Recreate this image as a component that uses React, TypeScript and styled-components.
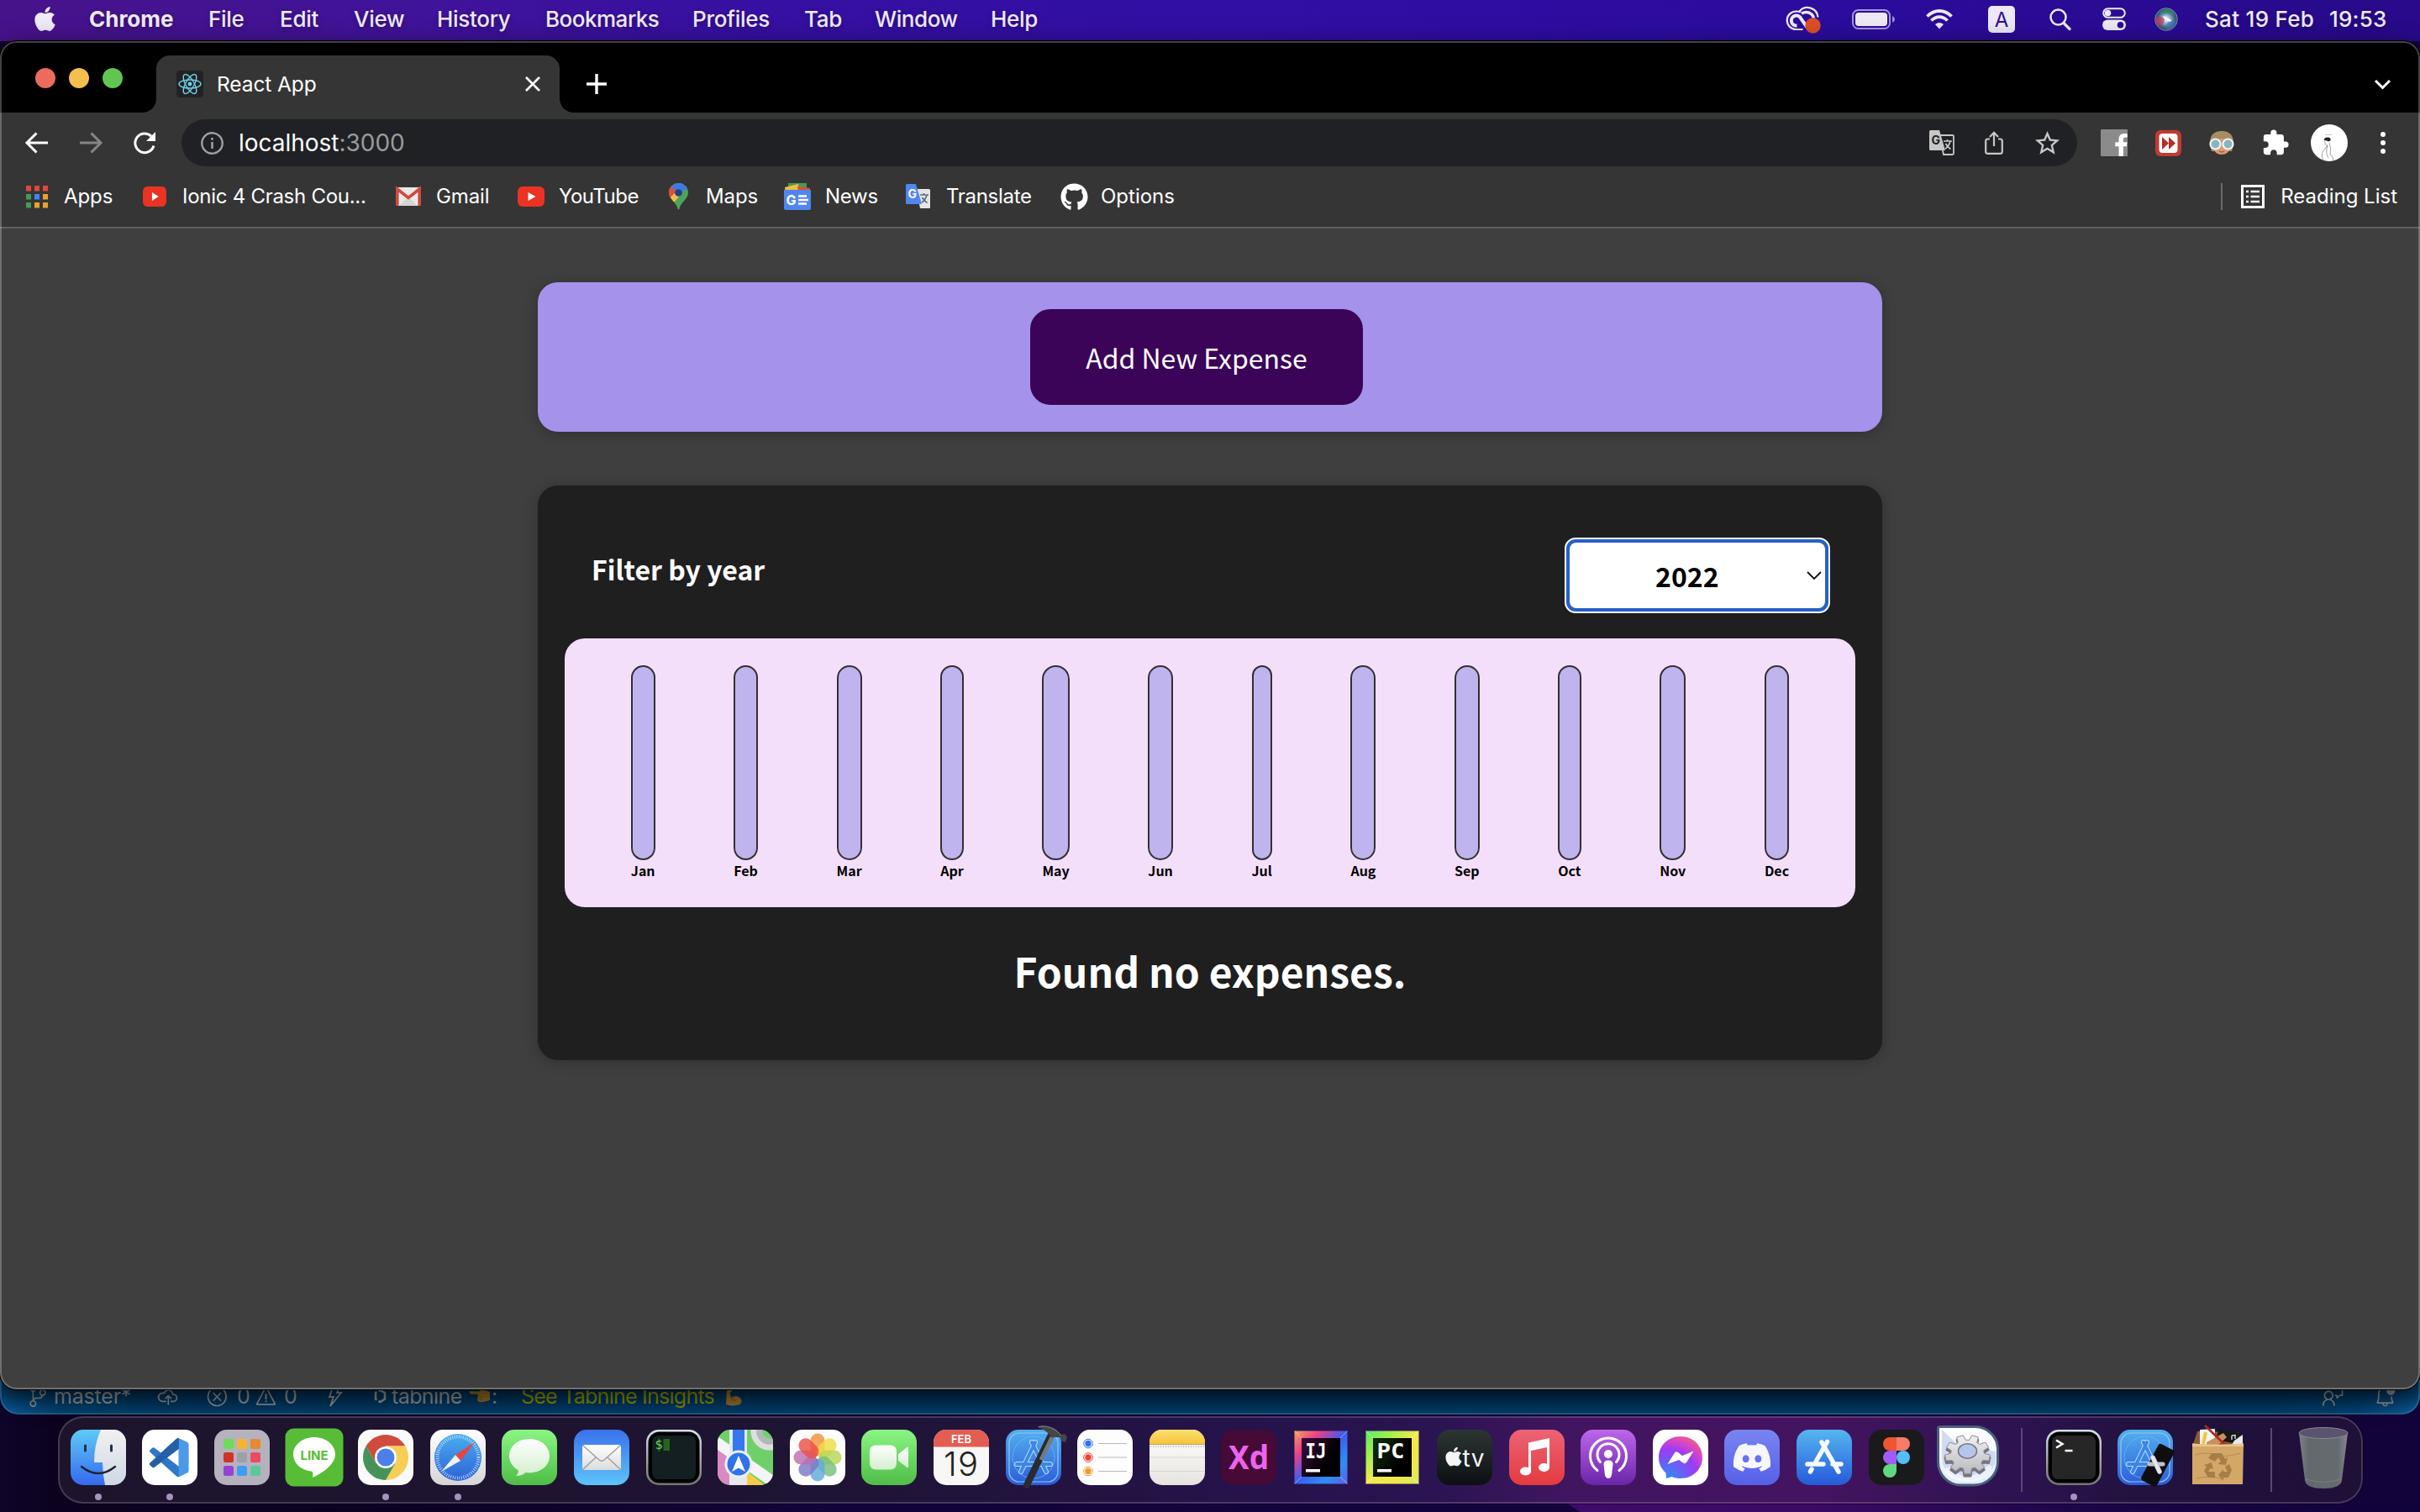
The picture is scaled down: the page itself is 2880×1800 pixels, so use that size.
import React from "react";
import styled, { createGlobalStyle } from "styled-components";
import { FaApple, FaDiscord, FaFacebookF, FaGithub } from "react-icons/fa";
import { MdExtension, MdStarBorder } from "react-icons/md";
import {
  VscBellDot,
  VscCloudUpload,
  VscError,
  VscFeedback,
  VscSourceControl,
  VscWarning,
} from "react-icons/vsc";

const ui = `Inter, "Liberation Sans", sans-serif`;
const jp = `"Noto Sans CJK JP", "Noto Sans", sans-serif`;

const GlobalStyle = createGlobalStyle`
  *, *::before, *::after { box-sizing: border-box; }
  body { margin: 0; background: #0d0326; font-family: ${ui}; }
  svg { display: block; flex: none; overflow: visible; }
`;

/* ---------- desktop ---------- */

const Desktop = styled.div`
  position: relative;
  width: 2880px;
  height: 1800px;
  overflow: hidden;
  display: flex;
  flex-direction: column;
  background: linear-gradient(90deg, #0e0529 0, #0c0220 60px, #0b0120 400px, #12033a 1000px, #14043e 1860px, #12033a 2880px);
  &::after {
    content: "";
    position: absolute;
    left: 1862px;
    bottom: 0;
    width: 1018px;
    height: 12px;
    background: linear-gradient(90deg, #3f0b6c 0, #3a0a66 300px, #1b0548 620px, #10023a 100%);
    clip-path: polygon(0 0, 100% 0, 100% 100%, 19px 100%);
  }
`;

const MenuBar = styled.header`
  flex: none;
  height: 49px;
  display: flex;
  align-items: center;
  justify-content: space-between;
  padding: 0 38px 4px 37px;
  color: #efeaf7;
  font-size: 26px;
  white-space: pre;
  background: linear-gradient(90deg, #47138a 0, #40139a 500px, #3610a2 900px, #300fa4 1500px, #2b0c9e 2100px, #280a8a 2880px);
`;

const Row = styled.div`
  display: flex;
  align-items: center;
`;

const MenuItem = styled.span<{ $w: number; $ls?: number; $bold?: boolean }>`
  flex: none;
  width: ${(p) => p.$w}px;
  font-weight: ${(p) => (p.$bold ? 700 : 500)};
  letter-spacing: ${(p) => p.$ls ?? -0.3}px;
  text-shadow: 0 2px 6px rgba(0, 0, 0, 0.3);
`;

const Slot = styled.span<{ $w: number }>`
  flex: none;
  display: flex;
  align-items: center;
  width: ${(p) => p.$w}px;
`;

/* ---------- browser ---------- */

const Browser = styled.main`
  position: relative;
  z-index: 1;
  flex: none;
  height: 1605px;
  border-radius: 20px;
  overflow: hidden;
  display: flex;
  flex-direction: column;
  background: #3f3f3f;
  box-shadow: 0 0 0 1px #000, 0 8px 30px rgba(0, 0, 0, 0.7);
  &::after {
    content: "";
    position: absolute;
    inset: 0;
    border: 2px solid rgba(255, 255, 255, 0.26);
    border-radius: 20px;
    pointer-events: none;
  }
`;

const TabStrip = styled.div`
  flex: none;
  height: 85px;
  background: #000;
  display: flex;
  align-items: flex-end;
  padding-left: 42px;
`;

const Lights = styled.div`
  display: flex;
  gap: 16px;
  width: 144px;
  padding-bottom: 29px;
`;

const Light = styled.i<{ $c: string }>`
  width: 24px;
  height: 24px;
  border-radius: 50%;
  background: ${(p) => p.$c};
`;

const Tab = styled.div`
  position: relative;
  width: 480px;
  height: 68px;
  border-radius: 16px 16px 0 0;
  background: #353535;
  display: flex;
  align-items: center;
  padding: 0 23px 0 24px;
  color: #fff;
  font-size: 24px;
  &::before, &::after {
    content: "";
    position: absolute;
    bottom: 0;
    width: 16px;
    height: 16px;
  }
  &::before { left: -16px; background: radial-gradient(circle at 0 0, transparent 15.5px, #353535 16px); }
  &::after { right: -16px; background: radial-gradient(circle at 100% 0, transparent 15.5px, #353535 16px); }
`;

const Favicon = styled.span`
  width: 32px;
  height: 32px;
  border-radius: 4px;
  background: #222;
  display: grid;
  place-items: center;
  margin-right: 16px;
`;

const TabTitle = styled.span`
  flex: 1;
  font-size: 24.5px;
  letter-spacing: -0.1px;
  padding-bottom: 1px;
`;

const TabActions = styled.div`
  flex: 1;
  display: flex;
  justify-content: space-between;
  padding: 0 35px 22px 32px;
`;

const Toolbar = styled.div`
  flex: none;
  height: 72px;
  background: #353535;
  display: flex;
  align-items: center;
  padding-left: 30px;
`;

const Address = styled.div`
  flex: none;
  width: 2256px;
  height: 56px;
  border-radius: 28px;
  background: #202124;
  display: flex;
  align-items: center;
  padding: 0 18px 0 23px;
  font-size: 28px;
  letter-spacing: -0.02px;
  color: #fff;
  white-space: pre;
`;

const Port = styled.span`
  color: #9a9a9c;
  flex: 1;
`;

const Bookmarks = styled.div`
  flex: none;
  height: 66px;
  background: #353535;
  border-bottom: 2px solid #5f6061;
  display: flex;
  align-items: center;
  justify-content: space-between;
  padding: 0 27px 9px 30px;
  color: #fff;
  font-size: 24px;
  white-space: pre;
`;

const Bookmark = styled.span<{ $w: number; $icon: number; $ls?: number }>`
  flex: none;
  width: ${(p) => p.$w}px;
  display: flex;
  align-items: center;
  letter-spacing: ${(p) => p.$ls ?? -0.1}px;
  & > svg {
    margin-top: 1px;
    margin-right: ${(p) => p.$icon}px;
  }
`;

const Reading = styled.div`
  display: flex;
  align-items: center;
  height: 32px;
  border-left: 2px solid #6b6b6b;
  padding-left: 22px;
  gap: 19px;
`;

/* ---------- expenses page ---------- */

const Page = styled.section`
  flex: 1;
  display: flex;
  flex-direction: column;
  align-items: center;
  gap: 64px;
  padding-top: 64px;
  font-family: ${jp};
`;

const Card = styled.div<{ $bg: string }>`
  width: 1600px;
  border-radius: 24px;
  padding: 32px;
  background: ${(p) => p.$bg};
  box-shadow: 0 2px 16px rgba(0, 0, 0, 0.25);
`;

const AddCard = styled(Card)`
  height: 178px;
  display: flex;
  justify-content: center;
`;

const AddButton = styled.button`
  width: 396px;
  height: 114px;
  margin-right: 32px;
  padding: 0 0 1px;
  border: 2px solid #3b0458;
  border-radius: 24px;
  background: #3b0458;
  color: #fff;
  font: 400 32px/46px ${jp};
`;

const ExpensesCard = styled(Card)`
  height: 684px;
  display: flex;
  flex-direction: column;
  align-items: stretch;
`;

const FilterRow = styled.div`
  display: flex;
  justify-content: space-between;
  align-items: flex-start;
  height: 150px;
  padding: 30px 30px 0 32px;
`;

const FilterLabel = styled.label`
  color: #fff;
  font-weight: 700;
  font-size: 32px;
  line-height: 46px;
  padding-top: 14px;
`;

const YearSelect = styled.div`
  width: 316px;
  height: 90px;
  border-radius: 13px;
  border: 2px solid #fff;
  background: #2760c8;
  padding: 4px;
  display: flex;
`;

const YearValue = styled.div`
  flex: 1;
  border-radius: 8px;
  background: #fff;
  color: #000;
  font-weight: 700;
  font-size: 32px;
  line-height: 46px;
  display: flex;
  align-items: center;
  justify-content: space-between;
  padding: 0 4px 1px 102px;
  & > svg { margin-bottom: -1px; }
`;

const Chart = styled.div`
  flex: none;
  height: 320px;
  border-radius: 24px;
  background: #f4dffb;
  padding: 32px;
  display: flex;
  justify-content: space-around;
`;

const Month = styled.div`
  display: flex;
  flex-direction: column;
  align-items: stretch;
  font-size: 16px;
  font-weight: 700;
  line-height: 24px;
  color: #000;
  text-align: center;
`;

const Bar = styled.div`
  height: 232px;
  border: 2px solid #313131;
  border-radius: 24px;
  background: #c0b4ee;
`;

const Empty = styled.h2`
  margin: 40px 0 0;
  text-align: center;
  color: #fff;
  font-size: 48px;
  line-height: 70px;
  font-weight: 700;
`;

/* ---------- editor status bar ---------- */

const StatusBar = styled.div`
  flex: none;
  height: 70px;
  margin-top: -40px;
  border-radius: 0 0 22px 22px;
  border: 2px solid rgba(90, 150, 200, 0.4);
  border-top: 0;
  background:
    linear-gradient(180deg, rgba(0, 20, 40, 0.55) 40px, rgba(0, 20, 40, 0.12) 70px),
    linear-gradient(90deg, #0a67ad 0, #004c80 70px, #004575 200px, #004575 2700px, #004c80 2800px, #0a67ad 100%);
  display: flex;
  justify-content: space-between;
  align-items: flex-end;
  padding: 0 24px 5px 30px;
  color: #8b8f92;
  font-size: 25px;
  line-height: 30px;
  white-space: pre;
`;

const StatusItem = styled.span<{ $w: number; $c?: string; $ls?: number }>`
  flex: none;
  display: flex;
  align-items: center;
  height: 30px;
  width: ${(p) => p.$w}px;
  letter-spacing: ${(p) => p.$ls ?? -0.2}px;
  color: ${(p) => p.$c ?? "inherit"};
`;

/* ---------- dock ---------- */

const Dock = styled.footer`
  position: relative;
  z-index: 1;
  flex: none;
  width: 2743px;
  height: 104px;
  margin: 2px 0 0 69px;
  border-radius: 30px;
  border: 2px solid rgba(170, 140, 190, 0.3);
  background: linear-gradient(90deg, #1d142c 0, #1e1433 900px, #25134a 1400px, #2b1452 1640px, #421560 1800px, #43145f 2100px, #2d1350 2330px, #21123f 2480px, #1f1038 100%);
  box-shadow: 0 0 0 1px rgba(0, 0, 0, 0.5);
  display: flex;
  padding-left: 3px;
`;

const DockCell = styled.div`
  position: relative;
  flex: none;
  width: 85.6px;
  display: flex;
  flex-direction: column;
  align-items: center;
  padding-top: 14px;
`;

const RunningDot = styled.i`
  width: 8px;
  height: 8px;
  margin-top: 10px;
  border-radius: 50%;
  background: #a393bd;
`;

const DockDivider = styled.i`
  flex: none;
  width: 2px;
  height: 76px;
  margin: 12px 18px 0 20px;
  background: #5b4878;
`;

const Tile = ({ fill, children, r = 15 }: { fill: string; children?: React.ReactNode; r?: number }) => (
  <svg width="66" height="66" viewBox="0 0 66 66">
    <rect width="66" height="66" rx={r} fill={fill} />
    {children}
  </svg>
);

const Grad = ({ id, a, b, h }: { id: string; a: string; b: string; h?: boolean }) => (
  <linearGradient id={id} x1="0" y1="0" x2={h ? 1 : 0} y2={h ? 0 : 1}>
    <stop offset="0" stopColor={a} />
    <stop offset="1" stopColor={b} />
  </linearGradient>
);

const Finder = () => (
  <Tile fill="url(#fi)">
    <defs>
      <Grad id="fi" a="#5fcaf8" b="#3569ee" />
      <Grad id="fi2" a="#f1f0f0" b="#cfd8e6" />
    </defs>
    <path d="M36 0H51A15 15 0 0 1 66 15V51A15 15 0 0 1 51 66H41Q38 52 38 39H28Q28 18 36 0Z" fill="url(#fi2)" />
    <path d="M17.500 19v6M48.500 19v6" stroke="#22303f" strokeWidth="3" strokeLinecap="round" />
    <path d="M13 44Q33 60 53 44" fill="none" stroke="#1c2530" strokeWidth="2.400" strokeLinecap="round" />
  </Tile>
);

const Code = () => (
  <Tile fill="#fff">
    <g transform="translate(9 10) scale(1.93)">
      <path d="M23.15 2.587L18.21.21a1.494 1.494 0 0 0-1.705.29l-9.46 8.63-4.12-3.128a.999.999 0 0 0-1.276.057L.327 7.261A1 1 0 0 0 .326 8.74L3.899 12 .326 15.26a1 1 0 0 0 .001 1.479L1.65 17.94a.999.999 0 0 0 1.276.057l4.12-3.128 9.46 8.63a1.492 1.492 0 0 0 1.704.29l4.942-2.377A1.5 1.5 0 0 0 24 20.06V3.939a1.5 1.5 0 0 0-.85-1.352zm-5.146 14.861L10.826 12l7.178-5.448v10.896z" fill="#2f78c8" />
      <path d="M18 .150l5.200 2.450a1.500 1.500 0 0 1 .8 1.350V20.060a1.500 1.500 0 0 1-.8 1.350L18 23.850Z" fill="#4a9ae9" />
      <path d="M18 6.550L7.050 14.870 2.900 18a1 1 0 0 1-1.250-.06L.33 16.740a1 1 0 0 1 0-1.480L16.500.500A1.500 1.500 0 0 1 18 .150Z" fill="#2560a6" />
    </g>
  </Tile>
);

const launchColors = ["#6fdc55", "#f5b62f", "#e8892f", "#d23227", "#9aa2a8", "#ea4a62", "#9443d6", "#3f9df0", "#5cc79a"];
const Launchpad = () => (
  <Tile fill="#b5b2bd">
    {launchColors.map((c, i) => (
      <rect key={c} x={11 + (i % 3) * 16} y={11 + Math.floor(i / 3) * 16} width="12" height="12" rx="2.500" fill={c} />
    ))}
  </Tile>
);

const Line = () => (
  <svg width="66" height="66" viewBox="0 0 66 66">
    <rect x="-1.500" y="-1.500" width="69" height="69" rx="10" fill="#58bd36" />
    <path d="M33 9C19 9 8 18 8 29.500 8 40 17 48 29.500 49.500 32 50 31.500 53 31 57 38 54 58 43 58 29.500 58 18 47 9 33 9Z" fill="#fff" />
    <text x="33" y="35.500" textAnchor="middle" fontSize="15" fontWeight="700" fill="#58bd36" fontFamily={ui} textLength="33">LINE</text>
  </svg>
);

const Chrome = () => (
  <Tile fill="#fafafa">
    <g transform="translate(33 33)">
      {[["#cf4b3e", 0], ["#f7cd55", 120], ["#46935a", 240]].map(([c, a]) => (
        <path key={c} transform={`rotate(${a})`} fill={c as string} d="M-23.380 -13.500A27 27 0 0 1 23.380 -13.500H0L-11.690 6.750Z" />
      ))}
      <circle r="13" fill="#fff" />
      <circle r="10.500" fill="#4b80ea" />
    </g>
  </Tile>
);

const Safari = () => (
  <Tile fill="url(#sa)">
    <defs>
      <Grad id="sa" a="#fff" b="#d5d5d5" />
      <Grad id="sa2" a="#49aef0" b="#2c63d6" />
    </defs>
    <circle cx="33" cy="33" r="28" fill="url(#sa2)" />
    <circle cx="33" cy="33" r="24.500" fill="none" stroke="#d5e6fa" strokeWidth="4" strokeDasharray="0.8 1.770" />
    <path d="M53 15L36 37 30 30Z" fill="#e8463c" />
    <path d="M13 50L30 30 36 37Z" fill="#f3f3f3" />
  </Tile>
);

const Messages = () => (
  <Tile fill="url(#me)">
    <defs>
      <Grad id="me" a="#8af583" b="#50bd48" />
      <Grad id="me2" a="#fff" b="#d3efce" />
    </defs>
    <path d="M33 11C19 11 9 20 9 31.500 9 39 14 45 20 48.500 20 52 18.500 53.500 17 55 22 55 26 53.500 28.500 51 46 53 57 43 57 31.500 57 20 47 11 33 11Z" fill="url(#me2)" />
  </Tile>
);

const Mail = () => (
  <Tile fill="url(#ma)">
    <defs>
      <Grad id="ma" a="#3a72ec" b="#5ec3fa" />
      <Grad id="ma2" a="#fff" b="#dcdcdc" />
    </defs>
    <rect x="10" y="18" width="46" height="30" rx="3" fill="url(#ma2)" />
    <path d="M11 19L30 36Q33 38.500 36 36L55 19M11 47L26 33M55 47L40 33" fill="none" stroke="#9b9b9b" strokeWidth="1.300" />
  </Tile>
);

const TerminalTile = ({ screen, children }: { screen: string; children: React.ReactNode }) => (
  <Tile fill="url(#te)">
    <defs>
      <Grad id="te" a="#d3e3ea" b="#77716c" />
    </defs>
    <rect x="2.500" y="2.500" width="61" height="61" rx="13" fill="#000" />
    <rect x="7" y="7" width="52" height="52" rx="7" fill={screen} />
    {children}
  </Tile>
);

const ITerm = () => (
  <TerminalTile screen="#141f22">
    <text x="10.500" y="23" fontSize="15" fontFamily='"DejaVu Sans Mono", monospace' fill="#62d84e">$</text>
    <rect x="20.500" y="11" width="7.500" height="14" fill="#27651f" />
  </TerminalTile>
);

const MapsApp = () => (
  <svg width="66" height="66" viewBox="0 0 66 66">
    <defs>
      <clipPath id="mp"><rect width="66" height="66" rx="15" /></clipPath>
    </defs>
    <g clipPath="url(#mp)">
      <rect width="66" height="66" fill="#6fd06a" />
      <path d="M0 22L66 76H0Z" fill="#d98ac4" />
      <path d="M30 66V46L56 66Z" fill="#f4cd48" />
      <path d="M0 8L66 54V70L0 24Z" fill="#f4f4f5" />
      <rect x="14" y="0" width="21" height="66" fill="#e6e8ee" />
      <rect x="18" y="0" width="14" height="34" fill="#3477ee" />
      <circle cx="62" cy="2" r="19" fill="none" stroke="#dcdedf" strokeWidth="7" />
      <circle cx="62" cy="2" r="12" fill="none" stroke="#b3b7bb" strokeWidth="7" />
    </g>
    <circle cx="25" cy="41" r="16.500" fill="#eceff4" />
    <circle cx="25" cy="41" r="13.500" fill="#2f73ec" />
    <path d="M25 31L33 50 25 45.500 17 50Z" fill="#fff" />
  </svg>
);

const petals = ["#f0943a", "#efdd45", "#b9d657", "#77c07a", "#61a9dc", "#7b79c4", "#bd6fae", "#ea5148"];
const Photos = () => (
  <Tile fill="#fdfdfd">
    {petals.map((c, i) => (
      <rect key={c} x="24.500" y="4.500" width="17" height="27" rx="8.500" fill={c} opacity="0.82" transform={`rotate(${i * 45} 33 33)`} />
    ))}
    <circle cx="33" cy="33" r="1.500" fill="#fff" />
  </Tile>
);

const FaceTime = () => (
  <Tile fill="url(#me)">
    <rect x="10" y="18.500" width="32" height="29" rx="7" fill="url(#me2)" />
    <path d="M44 29L54.500 21Q56 20 56 22V44Q56 46 54.500 45L44 37Z" fill="url(#me2)" />
  </Tile>
);

const CalendarApp = () => (
  <Tile fill="#f8f7f5">
    <path d="M0 20.500V15A15 15 0 0 1 15 0H51A15 15 0 0 1 66 15V20.500Z" fill="#e35d52" />
    <text x="33" y="16" textAnchor="middle" fontSize="13" fontWeight="600" fill="#fff" fontFamily={ui} textLength="24">FEB</text>
    <text x="32.500" y="55" textAnchor="middle" fontSize="40" fontWeight="300" fill="#222" fontFamily={ui} textLength="41">19</text>
  </Tile>
);

const Blueprint = () => (
  <>
    <defs>
      <Grad id="xc" a="#53b0ee" b="#2c5cd9" />
    </defs>
    <rect x="4" y="4" width="58" height="58" rx="12" fill="none" stroke="#8fc8f5" strokeWidth="1.200" />
    <circle cx="33" cy="33" r="25" fill="none" stroke="#6fb4f0" strokeWidth="0.8" />
    <g fill="none" stroke="#b5dcfa" strokeWidth="6" strokeLinecap="round">
      <path d="M35 15L18 50M31 15L48 50M13 41H53" />
    </g>
    <g fill="none" stroke="#3d86e4" strokeWidth="4" strokeLinecap="round">
      <path d="M35 15L18 50M31 15L48 50M13 41H53" />
    </g>
  </>
);

const Xcode = () => (
  <Tile fill="url(#xc)">
    <Blueprint />
    <path d="M54 6L25 66" stroke="#2a2b30" strokeWidth="8" strokeLinecap="round" />
    <path d="M55 9L42 36" stroke="#77797f" strokeWidth="5" />
    <path d="M37 -3Q48 -7 60 0L66 6 70 5 73 9 71 15 67 14 64 9 55 9 50 4Q45 -1 37 -3Z" fill="#45464c" />
    <path d="M39 -3.500Q49 -6 60 1L66 7" stroke="#85878d" strokeWidth="1" fill="none" />
  </Tile>
);

const Reminders = () => (
  <Tile fill="#fdfdfd">
    {["#2f74f0", "#ea4338", "#f09a36"].map((c, i) => (
      <g key={c}>
        <circle cx="13" cy={16.500 + i * 16.500} r="5.300" fill="none" stroke={c} strokeWidth="1" />
        <circle cx="13" cy={16.500 + i * 16.500} r="3.700" fill={c} />
        <path d={`M25 ${16.500 + i * 16.500}H59`} stroke="#b9b9b9" strokeWidth="1.200" />
      </g>
    ))}
  </Tile>
);

const Notes = () => (
  <Tile fill="url(#no)">
    <defs>
      <Grad id="no" a="#fff" b="#e6e4df" />
      <Grad id="no2" a="#fae072" b="#f5c43a" />
    </defs>
    <path d="M0 17V15A15 15 0 0 1 15 0H51A15 15 0 0 1 66 15V17Z" fill="url(#no2)" />
    <path d="M0 17.500H66" stroke="#b9a768" strokeWidth="1" />
    <path d="M1 20H66" stroke="#b3b3b3" strokeWidth="1.500" strokeDasharray="1.200 1.800" />
    <path d="M0 33H66M0 49.500H66" stroke="#d8d7d3" strokeWidth="1.200" />
  </Tile>
);

const Xd = () => (
  <Tile fill="#450a36">
    <text x="33" y="46.500" textAnchor="middle" fontSize="39" fontWeight="700" fill="#ee63ee" fontFamily='"Noto Sans", sans-serif' textLength="48" lengthAdjust="spacingAndGlyphs">Xd</text>
  </Tile>
);

const JetBrains = ({ id, name, stops, inner }: { id: string; name: string; stops: string[]; inner: string }) => (
  <svg width="66" height="66" viewBox="0 0 66 66">
    <defs>
      <linearGradient id={id} x1="0" y1="0" x2="1" y2="1">
        {stops.map((c, i) => (
          <stop key={c} offset={i / (stops.length - 1)} stopColor={c} />
        ))}
      </linearGradient>
      <linearGradient id={`${id}b`} x1="0" y1="0" x2="1" y2="0.6">
        <stop offset="0" stopColor={inner} />
        <stop offset="0.8" stopColor="#000" />
      </linearGradient>
    </defs>
    <rect x="1.500" y="1.500" width="63" height="63" fill={`url(#${id})`} />
    <path d="M1.500 1.500L10 10M64.500 1.500L56 10M1.500 64.500L10 56M64.500 64.500L56 56" stroke="#fff" strokeOpacity="0.45" />
    <rect x="10" y="10" width="46" height="46" fill={`url(#${id}b)`} />
    <text x="14.500" y="33.500" fontSize="25" fontWeight="700" fill="#fff" fontFamily='"DejaVu Sans Mono", monospace' textLength={name === "IJ" ? 25 : 33} lengthAdjust="spacingAndGlyphs">{name}</text>
    <rect x="15" y="47" width="17" height="3.500" fill="#fff" />
  </svg>
);

const AppleTv = () => (
  <Tile fill="url(#tv)">
    <defs>
      <Grad id="tv" a="#2b3634" b="#0d0f12" />
    </defs>
    <g transform="translate(7 19)"><FaApple size={26} color="#f5f5f5" /></g>
    <text x="30.500" y="43.500" fontSize="28" fontWeight="400" fill="#f5f5f5" fontFamily={ui} textLength="26">tv</text>
  </Tile>
);

const Music = () => (
  <Tile fill="url(#mu)">
    <defs>
      <Grad id="mu" a="#ec6377" b="#e33b3e" />
    </defs>
    <path d="M23 15.500L48 10V46H45V21L26 25V51H23Z" fill="#fff" />
    <ellipse cx="19.500" cy="49.500" rx="6.500" ry="5" fill="#fff" />
    <ellipse cx="41.500" cy="45" rx="6.500" ry="5" fill="#fff" />
  </Tile>
);

const Podcasts = () => (
  <Tile fill="url(#po)">
    <defs>
      <Grad id="po" a="#bd66ea" b="#6a25a8" />
    </defs>
    <g fill="none" stroke="#fff" strokeWidth="3" strokeLinecap="round">
      <path d="M20 49.500A21.500 21.500 0 1 1 46 49.500" transform="translate(0 -1)" />
      <path d="M23.500 39.500A13 13 0 1 1 42.500 39.500" transform="translate(0 -1)" />
    </g>
    <circle cx="33" cy="29" r="5" fill="#fff" />
    <path d="M27.500 41Q27.500 36.500 33 36.500 38.500 36.500 38.500 41L37 54Q36 58 33 58 30 58 29 54Z" fill="#fff" />
  </Tile>
);

const Messenger = () => (
  <Tile fill="#fff">
    <defs>
      <radialGradient id="ms" cx="0.2" cy="1" r="1.150">
        <stop offset="0" stopColor="#2f8bf8" />
        <stop offset="0.6" stopColor="#9a3cf3" />
        <stop offset="0.8" stopColor="#d846c4" />
        <stop offset="1" stopColor="#f3696c" />
      </radialGradient>
    </defs>
    <path d="M33 8C18 8 7 19 7 33 7 41 10.500 47 15.500 51.500L16 58 22.500 56C26 57.500 29.500 58 33 58 48 58 59 47 59 33 59 19 48 8 33 8Z" fill="url(#ms)" />
    <path d="M17.500 41L26 27.500Q27.500 25.500 30 27L35 31 48.500 25.500 40 39Q38.500 41 36 39.500L31 36Z" fill="#fff" />
  </Tile>
);

const Discord = () => (
  <Tile fill="url(#di)">
    <defs>
      <Grad id="di" a="#7a84ee" b="#5560ea" />
    </defs>
    <g transform="translate(9 9)"><FaDiscord size={48} color="#f7f6fd" /></g>
  </Tile>
);

const AppStore = () => (
  <Tile fill="url(#as)">
    <defs>
      <Grad id="as" a="#56b6f1" b="#2659d9" />
    </defs>
    <g stroke="#f5f8fd" strokeWidth="5.500" strokeLinecap="round">
      <path d="M36.500 14.500L23 38M30 15L50 50M13 41H32M43 41H53M18 47L16.500 50" />
    </g>
  </Tile>
);

const Figma = () => (
  <Tile fill="#1a1a1c">
    <path d="M33 9H25A8 8 0 0 0 25 25H33Z" fill="#ee5530" />
    <path d="M33 9H41A8 8 0 0 1 41 25H33Z" fill="#f37d68" />
    <path d="M33 25H25A8 8 0 0 0 25 41H33Z" fill="#a05cf6" />
    <circle cx="41" cy="33" r="8" fill="#55bdf8" />
    <path d="M33 41H25A8 8 0 1 0 33 49Z" fill="#62d681" />
  </Tile>
);

/* Outline of a nine-toothed wheel, teeth slightly narrower at the tip. */
const gearPath = (() => {
  const pts: string[] = [];
  for (let i = 0; i < 9; i++) {
    const mid = (i / 9) * Math.PI * 2 - Math.PI / 2 + Math.PI / 9;
    [[-0.25, 20], [-0.15, 27], [0.15, 27], [0.25, 20]].forEach(([d, r]) => {
      pts.push(`${(Math.cos(mid + d) * r).toFixed(2)} ${(Math.sin(mid + d) * r * 0.86).toFixed(2)}`);
    });
  }
  return `M${pts.join("L")}Z`;
})();

const Automation = () => (
  <svg width="66" height="66" viewBox="0 0 66 66">
    <defs>
      <Grad id="ge" a="#f0f0f2" b="#b9babf" />
      <Grad id="gp" a="#ffffff" b="#e4ebf8" />
    </defs>
    <path d="M-1 -3.500H42A27 27 0 0 1 68.500 23V38A28 28 0 0 1 40.500 66H25A27.500 27.500 0 0 1 -2.500 38.500V-2A1.500 1.500 0 0 1 -1 -3.500Z" fill="url(#gp)" stroke="#49607f" strokeWidth="3" strokeLinejoin="round" />
    <path d="M2 0L20 17 66 26V38Q60 56 38 60 0 58 2 30Z" fill="#c3d1ef" opacity="0.75" />
    <path d="M14 44Q30 68 58 42L62 44Q56 61 34 62 10 62 5 46Z" fill="#fff" opacity="0.6" />
    <path d={gearPath} transform="translate(32.500 32.500)" fill="#77767e" stroke="#77767e" strokeWidth="2" strokeLinejoin="round" />
    <path d={gearPath} transform="translate(32.500 29.500)" fill="url(#ge)" stroke="#8d8c93" strokeWidth="1" strokeLinejoin="round" />
    <ellipse cx="32.500" cy="25.500" rx="11" ry="8.800" fill="#b4c6ea" stroke="#77767e" strokeWidth="1.600" />
  </svg>
);

const Terminal = () => (
  <TerminalTile screen="#262626">
    <path d="M12 12.500L19.500 17 12 21.500" fill="none" stroke="#fff" strokeWidth="2.500" />
    <path d="M22.500 25H31.500" stroke="#fff" strokeWidth="2.500" />
  </TerminalTile>
);

const Simulator = () => (
  <Tile fill="url(#xc)">
    <Blueprint />
    <rect x="37" y="18" width="21" height="49" rx="3.500" fill="#0e0e10" transform="rotate(28 48 43)" />
    <path d="M42 33L50 50" stroke="#d6d9de" strokeWidth="5.500" strokeLinecap="round" />
    <path d="M38 41H54" stroke="#bfc2c8" strokeWidth="5" strokeLinecap="round" />
    <path d="M42 33L50 50" stroke="#e4e6ea" strokeWidth="4" strokeLinecap="round" />
  </Tile>
);

const PaperBag = () => (
  <svg width="66" height="66" viewBox="0 0 66 66">
    <path d="M4 17L9 2 58 3 62 18Z" fill="#8b5a32" />
    <path d="M12 0L30 -1V18H12Z" fill="#f4f4f4" />
    <path d="M35 -2L60 4 56 17 31 12Z" fill="#17181b" />
    <path d="M53 13L63 6V18H50Z" fill="#e9e9ea" />
    <path d="M50 7L54 6.500V11M50 7V12" stroke="#fff" strokeWidth="1.200" fill="none" />
    <path d="M19 3L16 17" stroke="#f2c33d" strokeWidth="4" />
    <path d="M20 15L40 4 44 9 34 18H20Z" fill="#c98f5c" />
    <path d="M18 -5L42 18" stroke="#a52a22" strokeWidth="2.500" />
    <path d="M3 16.500Q33 19 64 16.500L63 65H3Z" fill="#d3a768" />
    <path d="M3 16.500Q33 19 64 16.500V20H3Z" fill="#e9c58c" />
    <path d="M6 30Q20 26 30 30T60 28M8 58Q24 54 40 59" stroke="#b98c50" strokeWidth="1" fill="none" />
    <g fill="#a87d48">
      <path d="M26 28H38L42 35 45 33 43 42 33 41 37 38 34 33 30 38 22 34Z" />
      <path d="M17 42L26 39 28 47 24.500 46 22 50H30V57H22L17 49 20 44Z" />
      <path d="M42 44L47 41 50 48 46 57H40V61L34 54 40 47V50H45Z" />
    </g>
  </svg>
);

const Trash = () => (
  <svg width="66" height="66" viewBox="0 0 66 66">
    <defs>
      <linearGradient id="tr" x1="0" x2="1">
        <stop offset="0" stopColor="#7f8288" />
        <stop offset="0.2" stopColor="#63686d" />
        <stop offset="0.8" stopColor="#666b6f" />
        <stop offset="1" stopColor="#85888d" />
      </linearGradient>
    </defs>
    <path d="M4 4L11 60Q12 70 33 70T55 60L62 4Z" fill="url(#tr)" />
    <ellipse cx="33" cy="4" rx="29" ry="6.500" fill="#595470" stroke="#8a8795" strokeWidth="1" />
    <path d="M12.500 59Q33 66 53.500 59" stroke="#9a9da1" strokeWidth="1" fill="none" opacity="0.4" />
  </svg>
);

const mainApps: [React.FC, boolean?][] = [
  [Finder, true], [Code, true], [Launchpad], [Line], [Chrome, true], [Safari, true], [Messages], [Mail], [ITerm],
  [MapsApp], [Photos], [FaceTime], [CalendarApp], [Xcode], [Reminders], [Notes], [Xd],
  [() => <JetBrains id="ij" name="IJ" inner="#3d0f3c" stops={["#f9a05a", "#e8408a", "#3b5cf0", "#2f8df5", "#5a62ea"]} />],
  [() => <JetBrains id="pc" name="PC" inner="#12300c" stops={["#5fe86b", "#9ff04e", "#f2e94c", "#f0e84a", "#d8ea5f"]} />],
  [AppleTv], [Music], [Podcasts], [Messenger], [Discord], [AppStore], [Figma], [Automation],
];
const recentApps: [React.FC, boolean?][] = [[Terminal, true], [Simulator], [PaperBag]];

const DockGroup = ({ apps }: { apps: [React.FC, boolean?][] }) => (
  <>
    {apps.map(([App, running], i) => (
      <DockCell key={i}>
        <App />
        {running && <RunningDot />}
      </DockCell>
    ))}
  </>
);

/* ---------- small glyphs ---------- */

const ReactLogo = () => (
  <svg width="28" height="28" viewBox="-14 -14 28 28" fill="none" stroke="#6fd3f2" strokeWidth="1.400">
    <circle r="2.400" fill="#6fd3f2" stroke="none" />
    <ellipse rx="13" ry="5" />
    <ellipse rx="13" ry="5" transform="rotate(60)" />
    <ellipse rx="13" ry="5" transform="rotate(120)" />
  </svg>
);

const CreativeCloud = () => (
  <svg width="42" height="34" viewBox="0 0 42 34" fill="none" stroke="#ece8f6">
    <path d="M19.500 29H11.500A10.600 10.600 0 0 1 11.500 7.500Q15 7.500 17 8.500" strokeWidth="2.200" />
    <path d="M15.500 7.500A12.500 12.500 0 0 1 37.500 14.500" strokeWidth="2.200" />
    <path d="M12.500 24.500A6 6 0 1 1 17.500 16.500L25 27" strokeWidth="4" />
    <path d="M18 10Q25 6.500 30 11 32 13 32.500 15.500" strokeWidth="3.600" />
    <circle cx="31.500" cy="24.500" r="9.200" fill="#dd4f28" stroke="none" />
  </svg>
);

const Battery = () => (
  <svg width="52" height="24" viewBox="0 0 52 24">
    <rect x="1" y="1" width="44" height="22" rx="6.500" fill="none" stroke="#a594d8" strokeWidth="2" />
    <rect x="4" y="4" width="38" height="16" rx="4" fill="#ece8f6" />
    <path d="M48 8Q51 9.500 51 12T48 16Z" fill="#a594d8" />
  </svg>
);

const Wifi = () => (
  <svg width="32" height="24" viewBox="0 0 32 24" fill="none" stroke="#ece8f6" strokeWidth="3.800">
    <path d="M1.500 8.500Q8 2 16 2T30.500 8.500M6.500 13.500Q11 9.200 16 9.200T25.500 13.500" />
    <path d="M16 23.500L11 18Q16 14 21 18Z" fill="#ece8f6" stroke="none" />
  </svg>
);

const InputA = () => (
  <svg width="32" height="32" viewBox="0 0 32 32">
    <rect width="32" height="32" rx="5" fill="#ece8f6" />
    <text x="16" y="25" fontSize="24" textAnchor="middle" fill="#2d0c96" fontFamily={ui}>A</text>
  </svg>
);

const Spotlight = () => (
  <svg width="26" height="26" viewBox="0 0 26 26" fill="none" stroke="#ece8f6" strokeWidth="2.500" strokeLinecap="round">
    <circle cx="10.500" cy="10.500" r="9" />
    <path d="M17 17.500L24 24.500" strokeWidth="3.200" />
  </svg>
);

const ControlCenter = () => (
  <svg width="28" height="27" viewBox="0 0 28 27">
    <rect x="1.200" y="1.200" width="25.600" height="10.600" rx="5.300" fill="none" stroke="#ece8f6" strokeWidth="2" />
    <circle cx="6.500" cy="6.500" r="3.800" fill="#ece8f6" />
    <rect y="14.500" width="28" height="12.500" rx="6.200" fill="#ece8f6" />
    <circle cx="21.500" cy="20.800" r="3.800" fill="#2a0b92" />
  </svg>
);

const Siri = () => (
  <svg width="28" height="28" viewBox="0 0 28 28">
    <defs>
      <radialGradient id="si">
        <stop offset="0" stopColor="#fff" />
        <stop offset="0.250" stopColor="#b8cbe6" />
        <stop offset="0.700" stopColor="#3f6f8c" />
        <stop offset="1" stopColor="#3a3f66" />
      </radialGradient>
    </defs>
    <circle cx="14" cy="14" r="13.300" fill="url(#si)" stroke="#7d8aa5" strokeWidth="1" />
    <path d="M5 7Q10 1 18 2 24 4 24 9 14 6 5 7Z" fill="#2f8a6a" opacity="0.75" />
    <path d="M1.500 12Q7 8 12 14 11 22 5 22 1 18 1.500 12Z" fill="#c8385f" opacity="0.7" />
    <path d="M16 18Q22 14 26 17 24 24 15 26.500 12 23 16 18Z" fill="#3b79b8" opacity="0.7" />
    <path d="M10 10Q14 11 21 16 14 18 10 10Z" fill="#fff" />
  </svg>
);

const Arrow = ({ flip, c }: { flip?: boolean; c: string }) => (
  <svg width="28" height="26" viewBox="0 0 28 26" fill="none" stroke={c} strokeWidth="3">
    <path d={flip ? "M1 13H25M14.500 1.500L26 13 14.500 24.500" : "M27 13H3M13.500 1.500L2 13 13.500 24.500"} />
  </svg>
);

const Reload = () => (
  <svg width="28" height="28" viewBox="0 0 28 28">
    <path d="M22 6.200A11.300 11.300 0 1 0 25 17.500" fill="none" stroke="#fff" strokeWidth="3" />
    <path d="M27 1V12H16Z" fill="#fff" />
  </svg>
);

const Info = () => (
  <svg width="27" height="27" viewBox="0 0 27 27">
    <circle cx="13.500" cy="13.500" r="12.200" fill="none" stroke="#9aa0a6" strokeWidth="2.400" />
    <path d="M13.500 12V20M13.500 7V9.700" stroke="#9aa0a6" strokeWidth="2.600" />
  </svg>
);

const TranslateGlyph = ({ front, back, mark, g }: { front: string; back: string; mark: string; g: string }) => (
  <svg width="30" height="30" viewBox="0 0 30 30">
    <path d="M12 6H27.500A1.500 1.500 0 0 1 29 7.500V27.500A1.500 1.500 0 0 1 27.500 29H17Z" fill={back} stroke={front === "#c7c7c7" ? front : "none"} strokeWidth="1.800" />
    <path d="M1.500 0H12L19 24H1.500A1.500 1.500 0 0 1 0 22.500V1.500A1.500 1.500 0 0 1 1.500 0Z" fill={front} />
    <path d="M17 13H27M21.500 11V13M25 13Q23.500 19 19 22M19.500 16Q21.500 20 25.500 22.500" fill="none" stroke={mark} strokeWidth="1.700" />
    <text x="2.500" y="16.500" fontSize="14" fontWeight="700" fill={g} fontFamily={ui}>G</text>
  </svg>
);

const Share = () => (
  <svg width="22" height="28" viewBox="0 0 22 28" fill="none" stroke="#c7c7c7" strokeWidth="2.200">
    <path d="M6 9.500H3.500Q1.200 9.500 1.200 12V24.500Q1.200 26.800 3.500 26.800H18.500Q20.800 26.800 20.800 24.500V12Q20.800 9.500 18.500 9.500H16M11 18V2M6 7L11 1.800 16 7" />
  </svg>
);

const FacebookTile = () => (
  <svg width="32" height="32" viewBox="0 0 32 32">
    <rect width="32" height="32" fill="#8b8b8b" rx="1" />
    <g transform="translate(11 5)"><FaFacebookF size={27} color="#fff" /></g>
  </svg>
);

const FastForward = () => (
  <svg width="31" height="31" viewBox="0 0 31 31">
    <rect width="31" height="31" rx="6" fill="#c23a30" />
    <rect x="4.500" y="4" width="22" height="23" rx="4" fill="#fff" />
    <path d="M8 8L16 15.500 8 23ZM16 8L24 15.500 16 23Z" fill="#b0302a" />
  </svg>
);

const Face = () => (
  <svg width="32" height="30" viewBox="0 0 32 30">
    <path d="M2 18Q1 1 16 1T30 18L28 25H4Z" fill="#a88d62" />
    <path d="M6 12Q16 8 26 12V21Q24 29 16 29T6 21Z" fill="#d99c74" />
    <circle cx="8.500" cy="16.500" r="6" fill="#87b5c4" stroke="#f0f3f4" strokeWidth="2.200" />
    <circle cx="23.500" cy="16.500" r="6" fill="#87b5c4" stroke="#f0f3f4" strokeWidth="2.200" />
    <path d="M13 25Q16 27 19 25" stroke="#a5553f" strokeWidth="1.500" fill="none" />
  </svg>
);

const Avatar = () => (
  <svg width="44" height="44" viewBox="0 0 44 44">
    <circle cx="22" cy="22" r="22" fill="#fff" />
    <path d="M17 12.500H25" stroke="#bbb" strokeWidth="0.800" />
    <path d="M16 19Q15.500 15.500 20 15.500 24.500 15.500 23.500 19L22 20.500 17 19Z" fill="#222" />
    <path d="M17 19Q16 25 20 25L14 33Q12 39 15 43M22 22Q25 30 23 36 27 38 27 43M20 25Q17 34 21 40" fill="none" stroke="#888" strokeWidth="0.800" />
  </svg>
);

const Dots = () => (
  <svg width="6" height="26" viewBox="0 0 6 26" fill="#fff">
    <circle cx="3" cy="3" r="3" />
    <circle cx="3" cy="13" r="3" />
    <circle cx="3" cy="23" r="3" />
  </svg>
);

const gridColors = ["#e0483a", "#e0483a", "#e0483a", "#469a55", "#4285f4", "#e6a32f", "#469a55", "#e6a32f", "#e6a32f"];
const AppsGrid = () => (
  <svg width="27" height="26" viewBox="0 0 27 26">
    {gridColors.map((c, i) => (
      <rect key={i} x={1 + (i % 3) * 10} y={Math.floor(i / 3) * 10} width="6" height="6.500" fill={c} />
    ))}
  </svg>
);

const YouTubeIcon = ({ w }: { w: number }) => (
  <svg width={w} height="24" viewBox="0 0 32 24" preserveAspectRatio="none">
    <rect width="32" height="24" rx="6" fill="#ea3323" />
    <path d="M12.500 7L21.500 12 12.500 17Z" fill="#fff" />
  </svg>
);

const GmailIcon = () => (
  <svg width="30" height="22" viewBox="0 0 30 22">
    <rect width="30" height="22" rx="2" fill="#e9e9e7" />
    <path d="M4 22L15 11 26 22" fill="#d6d5d3" />
    <path d="M1.800 22V2L15 12.500 28.200 2V22" fill="none" stroke="#cf4a3d" strokeWidth="3.600" />
  </svg>
);

const MapPin = () => (
  <svg width="23" height="32" viewBox="0 0 23 32">
    <defs>
      <clipPath id="pin"><path d="M11.500 0A11.500 11.500 0 0 1 23 11.500C23 19 14.500 22 12.500 30.500Q11.500 32.500 10.500 30.500C8.500 22 0 19 0 11.500A11.500 11.500 0 0 1 11.500 0Z" /></clipPath>
    </defs>
    <g clipPath="url(#pin)">
      <rect width="23" height="32" fill="#4ba559" />
      <path d="M0 4L3 0 13 10 3 19 -3 12Z" fill="#d8503f" />
      <path d="M2 4L9 -2H24V6L12 11.500Z" fill="#4079e3" />
      <path d="M1.500 17L8 11 13 15 6 23Z" fill="#f2bd42" />
    </g>
    <circle cx="11.500" cy="11.500" r="4.300" fill="#22408a" />
  </svg>
);

const NewsIcon = () => (
  <svg width="32" height="32" viewBox="0 0 32 32">
    <rect x="5" y="0" width="22" height="12" fill="#469a55" />
    <path d="M1 5L17 1 18 12H2Z" fill="#f2bd42" />
    <path d="M16 4L31 6 30 12H17Z" fill="#dc4e3e" />
    <path d="M0 8H32V30A2 2 0 0 1 30 32H2A2 2 0 0 1 0 30Z" fill="#5086ee" />
    <text x="2.500" y="25.500" fontSize="16" fontWeight="700" fill="#fff" fontFamily={ui}>G</text>
    <path d="M17 15.500H27M17 20H29M17 24.500H27" stroke="#fff" strokeWidth="2.400" />
  </svg>
);

const ReadingIcon = () => (
  <svg width="28" height="28" viewBox="0 0 28 28" stroke="#fff" fill="none">
    <rect x="1.500" y="1.500" width="25" height="25" strokeWidth="3" />
    <path d="M6 8H9M6 14H9M6 20H9M11.500 8H22M11.500 14H22M11.500 20H22" strokeWidth="2.400" />
  </svg>
);

const PointLeft = () => (
  <svg width="26" height="18" viewBox="0 0 26 18">
    <path d="M1 3Q0 6 3 6.500L11 7 10 14Q12 17 17 16L25 14V4L15 0.500 12 3.500Z" fill="#8a6a22" />
    <path d="M12 10H17M12 13H17" stroke="#6b4f18" />
  </svg>
);

const Biceps = () => (
  <svg width="22" height="24" viewBox="0 0 24 26">
    <path d="M2 24L3 8Q4 1 9 1L11 5 7 9 9 15Q16 11 20 15 25 20 20 24 10 27 2 24Z" fill="#8d6a2a" />
    <path d="M9 15Q10 19 14 19" stroke="#5f4518" fill="none" />
  </svg>
);

const Hexagon = () => (
  <svg width="15" height="18" viewBox="0 0 15 18" fill="none" stroke="#8b8f92" strokeWidth="2.600">
    <path d="M5.500 3L7.500 2 13 5V12.500L7.500 16 5.500 15M3.500 13.500L2 12.500V5L3.500 4" />
  </svg>
);

const Bolt = () => (
  <svg width="16" height="28" viewBox="0 0 16 28" fill="none" stroke="#8b8f92" strokeWidth="1.800">
    <path d="M6 1H14L10 10H15L2 26 6 15H1Z" />
  </svg>
);

const months = ["Jan", "Feb", "Mar", "Apr", "May", "Jun", "Jul", "Aug", "Sep", "Oct", "Nov", "Dec"];

const menus: [string, number, number?][] = [
  ["File", 85], ["Edit", 88], ["View", 99], ["History", 129], ["Bookmarks", 175, -0.5], ["Profiles", 133],
  ["Tab", 84], ["Window", 138, -0.4], ["Help", 60],
];

export default function App() {
  return (
    <Desktop>
      <GlobalStyle />
      <MenuBar>
        <Row>
          <Slot $w={69}><FaApple size={33} /></Slot>
          <MenuItem $w={142} $ls={0} $bold>Chrome</MenuItem>
          {menus.map(([label, w, ls]) => (
            <MenuItem key={label} $w={w} $ls={ls}>{label}</MenuItem>
          ))}
        </Row>
        <Row>
          <Slot $w={78}><CreativeCloud /></Slot>
          <Slot $w={88}><Battery /></Slot>
          <Slot $w={74}><Wifi /></Slot>
          <Slot $w={73}><InputA /></Slot>
          <Slot $w={63}><Spotlight /></Slot>
          <Slot $w={62}><ControlCenter /></Slot>
          <Slot $w={60}><Siri /></Slot>
          <MenuItem $w={148} $ls={0.3}>Sat 19 Feb</MenuItem>
          <MenuItem $w={70} $ls={0.2}>19:53</MenuItem>
        </Row>
      </MenuBar>

      <Browser>
        <TabStrip>
          <Lights>
            <Light $c="#ec6a5e" />
            <Light $c="#f4bf4f" />
            <Light $c="#61c554" />
          </Lights>
          <Tab>
            <Favicon><ReactLogo /></Favicon>
            <TabTitle>React App</TabTitle>
            <svg width="18" height="18" viewBox="0 0 18 18" stroke="#fff" strokeWidth="2.600">
              <path d="M1 1L17 17M17 1L1 17" />
            </svg>
          </Tab>
          <TabActions>
            <svg width="24" height="24" viewBox="0 0 24 24" stroke="#fff" strokeWidth="3.400">
              <path d="M12 0V24M0 12H24" />
            </svg>
            <svg width="19" height="24" viewBox="0 0 19 24" stroke="#fff" strokeWidth="3" fill="none">
              <path d="M1 8L9.500 16.500 18 8" />
            </svg>
          </TabActions>
        </TabStrip>

        <Toolbar>
          <Slot $w={64}><Arrow c="#fff" /></Slot>
          <Slot $w={64}><Arrow c="#868686" flip /></Slot>
          <Slot $w={58}><Reload /></Slot>
          <Address>
            <Slot $w={45}><Info /></Slot>
            localhost<Port>:3000</Port>
            <Slot $w={66}><TranslateGlyph front="#c7c7c7" back="#202124" mark="#c7c7c7" g="#202124" /></Slot>
            <Slot $w={57}><Share /></Slot>
            <MdStarBorder size={35} color="#c7c7c7" />
          </Address>
          <Slot $w={28} />
          <Slot $w={65}><FacebookTile /></Slot>
          <Slot $w={63}><FastForward /></Slot>
          <Slot $w={63}><Face /></Slot>
          <Slot $w={59}><MdExtension size={34} color="#fff" /></Slot>
          <Slot $w={83}><Avatar /></Slot>
          <Dots />
        </Toolbar>

        <Bookmarks>
          <Row>
            <Bookmark $w={140} $icon={19}><AppsGrid />Apps</Bookmark>
            <Bookmark $w={301} $icon={19} $ls={-0.27}><YouTubeIcon w={28} />Ionic 4 Crash Cou...</Bookmark>
            <Bookmark $w={145} $icon={18}><GmailIcon />Gmail</Bookmark>
            <Bookmark $w={180} $icon={17} $ls={-0.5}><YouTubeIcon w={32} />YouTube</Bookmark>
            <Bookmark $w={137} $icon={21}><MapPin />Maps</Bookmark>
            <Bookmark $w={145} $icon={17} $ls={-0.3}><NewsIcon />News</Bookmark>
            <Bookmark $w={184} $icon={18} $ls={-0.3}>
              <TranslateGlyph front="#5086ee" back="#e3e5e8" mark="#5f6e7c" g="#fff" />Translate
            </Bookmark>
            <Bookmark $w={150} $icon={15} $ls={0}><FaGithub size={33} />Options</Bookmark>
          </Row>
          <Reading><ReadingIcon />Reading List</Reading>
        </Bookmarks>

        <Page>
          <AddCard $bg="#a592ea">
            <AddButton>Add New Expense</AddButton>
          </AddCard>
          <ExpensesCard $bg="#1f1f1f">
            <FilterRow>
              <FilterLabel>Filter by year</FilterLabel>
              <YearSelect>
                <YearValue>
                  2022
                  <svg width="18" height="11" viewBox="0 0 18 11" fill="none" stroke="#111" strokeWidth="1.800">
                    <path d="M1 1L9 9 17 1" />
                  </svg>
                </YearValue>
              </YearSelect>
            </FilterRow>
            <Chart>
              {months.map((m) => (
                <Month key={m}>
                  <Bar />
                  {m}
                </Month>
              ))}
            </Chart>
            <Empty>Found no expenses.</Empty>
          </ExpensesCard>
        </Page>
      </Browser>

      <StatusBar>
        <Row>
          <StatusItem $w={32}><VscSourceControl size={26} /></StatusItem>
          <StatusItem $w={122}>master*</StatusItem>
          <StatusItem $w={59}><VscCloudUpload size={27} /></StatusItem>
          <StatusItem $w={37}><VscError size={27} /></StatusItem>
          <StatusItem $w={21}>0</StatusItem>
          <StatusItem $w={35}><VscWarning size={27} /></StatusItem>
          <StatusItem $w={53}>0</StatusItem>
          <StatusItem $w={54}><Bolt /></StatusItem>
          <StatusItem $w={21}><Hexagon /></StatusItem>
          <StatusItem $w={92} $ls={-0.6}>tabnine</StatusItem>
          <StatusItem $w={27}><PointLeft /></StatusItem>
          <StatusItem $w={35}>:</StatusItem>
          <StatusItem $w={242} $c="#858a00" $ls={-0.75}>See Tabnine Insights</StatusItem>
          <StatusItem $w={30}><Biceps /></StatusItem>
        </Row>
        <Row>
          <StatusItem $w={61}><VscFeedback size={26} /></StatusItem>
          <StatusItem $w={29}><VscBellDot size={27} /></StatusItem>
        </Row>
      </StatusBar>

      <Dock>
        <DockGroup apps={mainApps} />
        <DockDivider />
        <DockGroup apps={recentApps} />
        <DockDivider />
        <DockCell><Trash /></DockCell>
      </Dock>
    </Desktop>
  );
}
